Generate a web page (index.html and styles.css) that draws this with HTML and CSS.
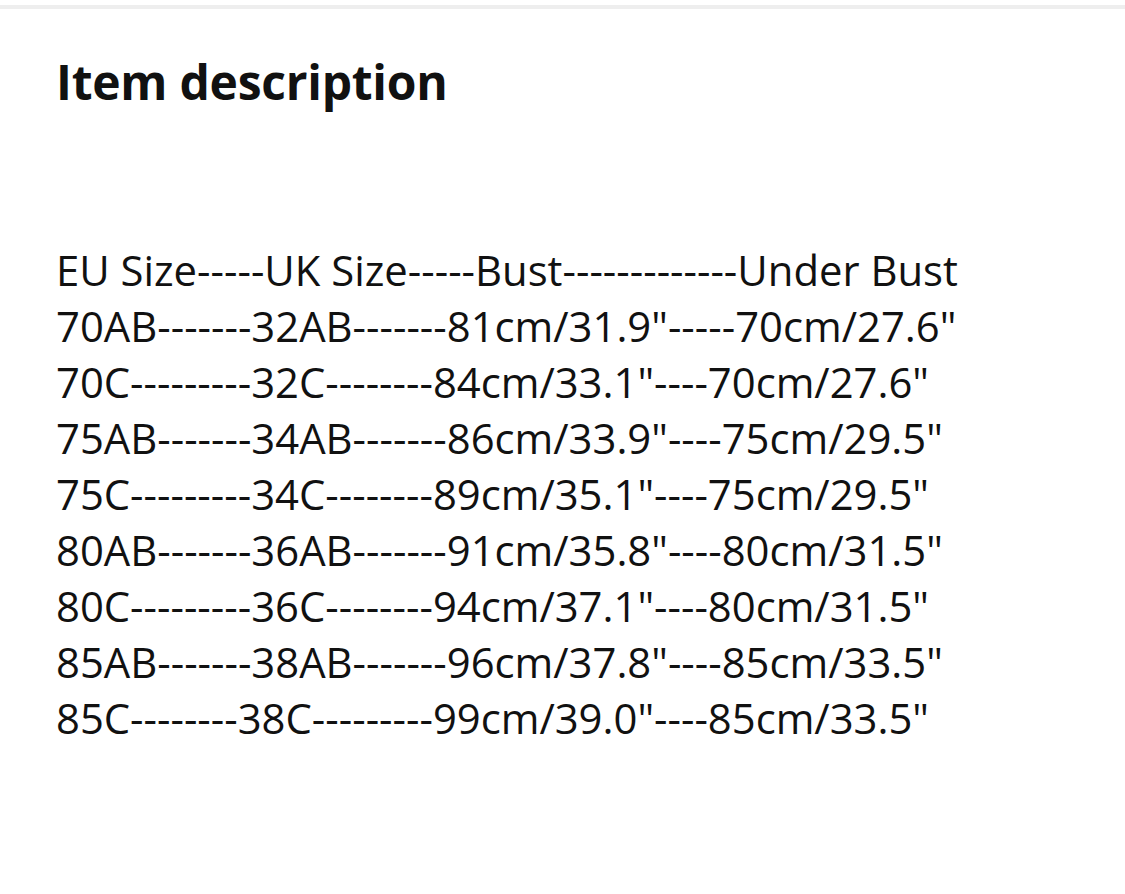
FILE: index.html
```html
<!DOCTYPE html>
<html>
<head>
<meta charset="utf-8">
<link rel="stylesheet" href="styles.css">
</head>
<body>
<div class="topbar"></div>
<main class="content">
  <h1 class="title">Item description</h1>
  <div class="table">
    <p class="row">EU Size-----UK Size-----Bust-------------Under Bust</p>
    <p class="row">70AB-------32AB-------81cm/31.9"-----70cm/27.6"</p>
    <p class="row">70C---------32C--------84cm/33.1"----70cm/27.6"</p>
    <p class="row">75AB-------34AB-------86cm/33.9"----75cm/29.5"</p>
    <p class="row">75C---------34C--------89cm/35.1"----75cm/29.5"</p>
    <p class="row">80AB-------36AB-------91cm/35.8"----80cm/31.5"</p>
    <p class="row">80C---------36C--------94cm/37.1"----80cm/31.5"</p>
    <p class="row">85AB-------38AB-------96cm/37.8"----85cm/33.5"</p>
    <p class="row">85C--------38C---------99cm/39.0"----85cm/33.5"</p>
  </div>
</main>
</body>
</html>
```
FILE: styles.css
```css
html, body {
  margin: 0;
  padding: 0;
  background: #ffffff;
}
body {
  font-family: "Open Sans", "Liberation Sans", sans-serif;
  color: #111111;
  width: 1125px;
  height: 894px;
  overflow: hidden;
}
.topbar {
  height: 4px;
  margin-top: 5px;
  background: #eeeeee;
}
.content {
  padding: 0 0 0 56px;
}
.title {
  margin: 43px 0 0 0;
  font-size: 48px;
  font-weight: 700;
  line-height: 60px;
  letter-spacing: -0.25px;
}
.table {
  margin-top: 130px;
}
.row {
  margin: 0;
  font-size: 41.8px;
  line-height: 56px;
  white-space: nowrap;
}
```
